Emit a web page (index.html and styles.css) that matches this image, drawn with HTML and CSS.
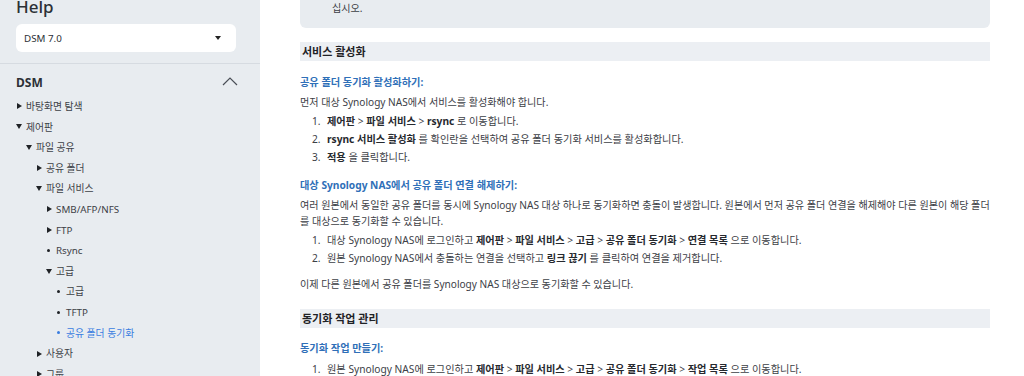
FILE: index.html
```html
<!DOCTYPE html>
<html lang="ko">
<head>
    <meta charset="UTF-8">
    <title>DSM Help - 공유 폴더 동기화</title>
    <link rel="stylesheet" href="styles.css">
</head>
<body>
    <div class="page">
        <aside class="side">
            <div class="sideTop">
                <h1 class="helpTitle">Help</h1>
                <div class="verSelect">
                    <span>DSM 7.0</span>
                    <span class="caret"></span>
                </div>
            </div>
            <nav class="sideNav">
                <div class="navHead">
                    <span>DSM</span>
                    <svg class="chev" width="16" height="9" viewBox="0 0 16 9"><path d="M1 8 L8 1 L15 8" fill="none" stroke="#4a4f57" stroke-width="1.2"/></svg>
                </div>
                <ul class="tree">
                    <li><span class="mk closed"></span>바탕화면 탐색</li>
                    <li><span class="mk open"></span>제어판
                        <ul>
                            <li><span class="mk open"></span>파일 공유
                                <ul>
                                    <li><span class="mk closed"></span>공유 폴더</li>
                                    <li><span class="mk open"></span>파일 서비스
                                        <ul>
                                            <li><span class="mk closed"></span>SMB/AFP/NFS</li>
                                            <li><span class="mk closed"></span>FTP</li>
                                            <li><span class="mk dot"></span>Rsync</li>
                                            <li><span class="mk open"></span>고급
                                                <ul>
                                                    <li><span class="mk dot"></span>고급</li>
                                                    <li><span class="mk dot"></span>TFTP</li>
                                                    <li class="active"><span class="mk dot"></span>공유 폴더 동기화</li>
                                                </ul>
                                            </li>
                                        </ul>
                                    </li>
                                    <li><span class="mk closed"></span>사용자</li>
                                    <li><span class="mk closed"></span>그룹</li>
                                </ul>
                            </li>
                        </ul>
                    </li>
                </ul>
            </nav>
        </aside>
        <main class="content">
            <div class="note">
                <p>십시오.</p>
            </div>

            <h2 class="secBar">서비스 활성화</h2>
            <h3 class="subHead">공유 폴더 동기화 활성화하기:</h3>
            <p>먼저 대상 Synology NAS에서 서비스를 활성화해야 합니다.</p>
            <ol>
                <li><b>제어판</b> &gt; <b>파일 서비스</b> &gt; <b>rsync</b> 로 이동합니다.</li>
                <li><b>rsync 서비스 활성화</b> 를 확인란을 선택하여 공유 폴더 동기화 서비스를 활성화합니다.</li>
                <li><b>적용</b> 을 클릭합니다.</li>
            </ol>

            <h3 class="subHead">대상 Synology NAS에서 공유 폴더 연결 해제하기:</h3>
            <p>여러 원본에서 동일한 공유 폴더를 동시에 Synology NAS 대상 하나로 동기화하면 충돌이 발생합니다. 원본에서 먼저 공유 폴더 연결을 해제해야 다른 원본이 해당 폴더를 대상으로 동기화할 수 있습니다.</p>
            <ol>
                <li>대상 Synology NAS에 로그인하고 <b>제어판</b> &gt; <b>파일 서비스</b> &gt; <b>고급</b> &gt; <b>공유 폴더 동기화</b> &gt; <b>연결 목록</b> 으로 이동합니다.</li>
                <li>원본 Synology NAS에서 충돌하는 연결을 선택하고 <b>링크 끊기</b> 를 클릭하여 연결을 제거합니다.</li>
            </ol>
            <p class="after">이제 다른 원본에서 공유 폴더를 Synology NAS 대상으로 동기화할 수 있습니다.</p>

            <h2 class="secBar">동기화 작업 관리</h2>
            <h3 class="subHead">동기화 작업 만들기:</h3>
            <ol>
                <li>원본 Synology NAS에 로그인하고 <b>제어판</b> &gt; <b>파일 서비스</b> &gt; <b>고급</b> &gt; <b>공유 폴더 동기화</b> &gt; <b>작업 목록</b> 으로 이동합니다.</li>
            </ol>
        </main>
    </div>
</body>
</html>
```

FILE: styles.css
```css
*{
    margin: 0; padding: 0;
    box-sizing: border-box;
}
html, body{
    height: 100%;
    overflow: hidden;
}
body{
    font-family: "Noto Sans", "Noto Sans CJK KR", sans-serif;
    font-size: 10.2px;
    color: #3c4046;
    background-color: #ffffff;
}
.page{
    display: flex;
    height: 100%;
}

/* 사이드바 */
.side{
    width: 260px;
    flex-shrink: 0;
    background-color: #e8ecf0;
}
.sideTop{
    padding: 0 24px 11px 16px;
    border-bottom: 1px solid #d6dbe1;
}
.helpTitle{
    font-size: 17px;
    font-weight: 500;
    line-height: 24px;
    margin-top: -5px;
    color: #2c3036;
}
.verSelect{
    margin-top: 5px;
    height: 28px;
    background-color: #ffffff;
    border-radius: 6px;
    display: flex;
    align-items: center;
    justify-content: space-between;
    padding: 0 15px 0 8px;
    font-size: 9.8px;
    color: #2c3036;
}
.caret{
    width: 0; height: 0;
    border-left: 3px solid transparent;
    border-right: 3px solid transparent;
    border-top: 4px solid #222;
}
.sideNav{
    padding: 8px 22px 0 16px;
    font-size: 9.8px;
}
.navHead{
    display: flex;
    justify-content: space-between;
    align-items: center;
    height: 20px;
    font-size: 12px;
    font-weight: 700;
    color: #2c3036;
}
.chev{
    margin-top: -2px;
}
.tree{
    list-style: none;
    margin-top: 5px;
}
.tree ul{
    list-style: none;
    padding-left: 10px;
}
.tree li{
    line-height: 20.6px;
    color: #3c4046;
}
.tree li.active{
    color: #3a7de0;
}
.mk{
    display: inline-block;
    width: 10px;
    vertical-align: middle;
    position: relative;
    top: -1px;
}
.mk.closed::before{
    content: "";
    display: block;
    width: 0; height: 0;
    margin-left: 1px;
    border-top: 3.5px solid transparent;
    border-bottom: 3.5px solid transparent;
    border-left: 5px solid #1f2226;
}
.mk.open::before{
    content: "";
    display: block;
    width: 0; height: 0;
    border-left: 3.5px solid transparent;
    border-right: 3.5px solid transparent;
    border-top: 5px solid #1f2226;
}
.mk.dot::before{
    content: "";
    display: block;
    width: 3px; height: 3px;
    margin-left: 1px;
    border-radius: 50%;
    background-color: #1f2226;
}
.active .mk.dot::before{
    background-color: #3a7de0;
}

/* 본문 */
.content{
    width: 730px;
    padding-left: 40px;
}
.content p{
    line-height: 16px;
    font-size: 10.1px;
}
.note{
    margin-top: -30px;
    padding: 30px 16px 12px 32px;
    background-color: #e8ecf0;
    border-radius: 0 0 6px 6px;
}
.secBar{
    margin-top: 14px;
    height: 19px;
    line-height: 19px;
    padding-left: 2px;
    background-color: #eceff3;
    font-size: 11px;
    font-weight: 700;
    color: #1f2226;
}
.subHead{
    margin-top: 11px;
    margin-bottom: 4px;
    font-size: 10.2px;
    font-weight: 700;
    line-height: 16px;
    color: #2f6fb8;
}
.secBar + .subHead{
    margin-top: 13px;
}
ol{
    margin-top: 2px;
    padding-left: 12px;
    list-style: none;
    counter-reset: step;
}
.content ol li{
    line-height: 18px;
    counter-increment: step;
}
.content ol li::before{
    content: counter(step) ".";
    display: inline-block;
    width: 15px;
}
b{
    font-weight: 700;
    color: #26292e;
}
.after{
    margin-top: 9px;
}
.after + .secBar{
    margin-top: 17px;
}
.after + .secBar + .subHead{
    margin-top: 12px;
}
```
